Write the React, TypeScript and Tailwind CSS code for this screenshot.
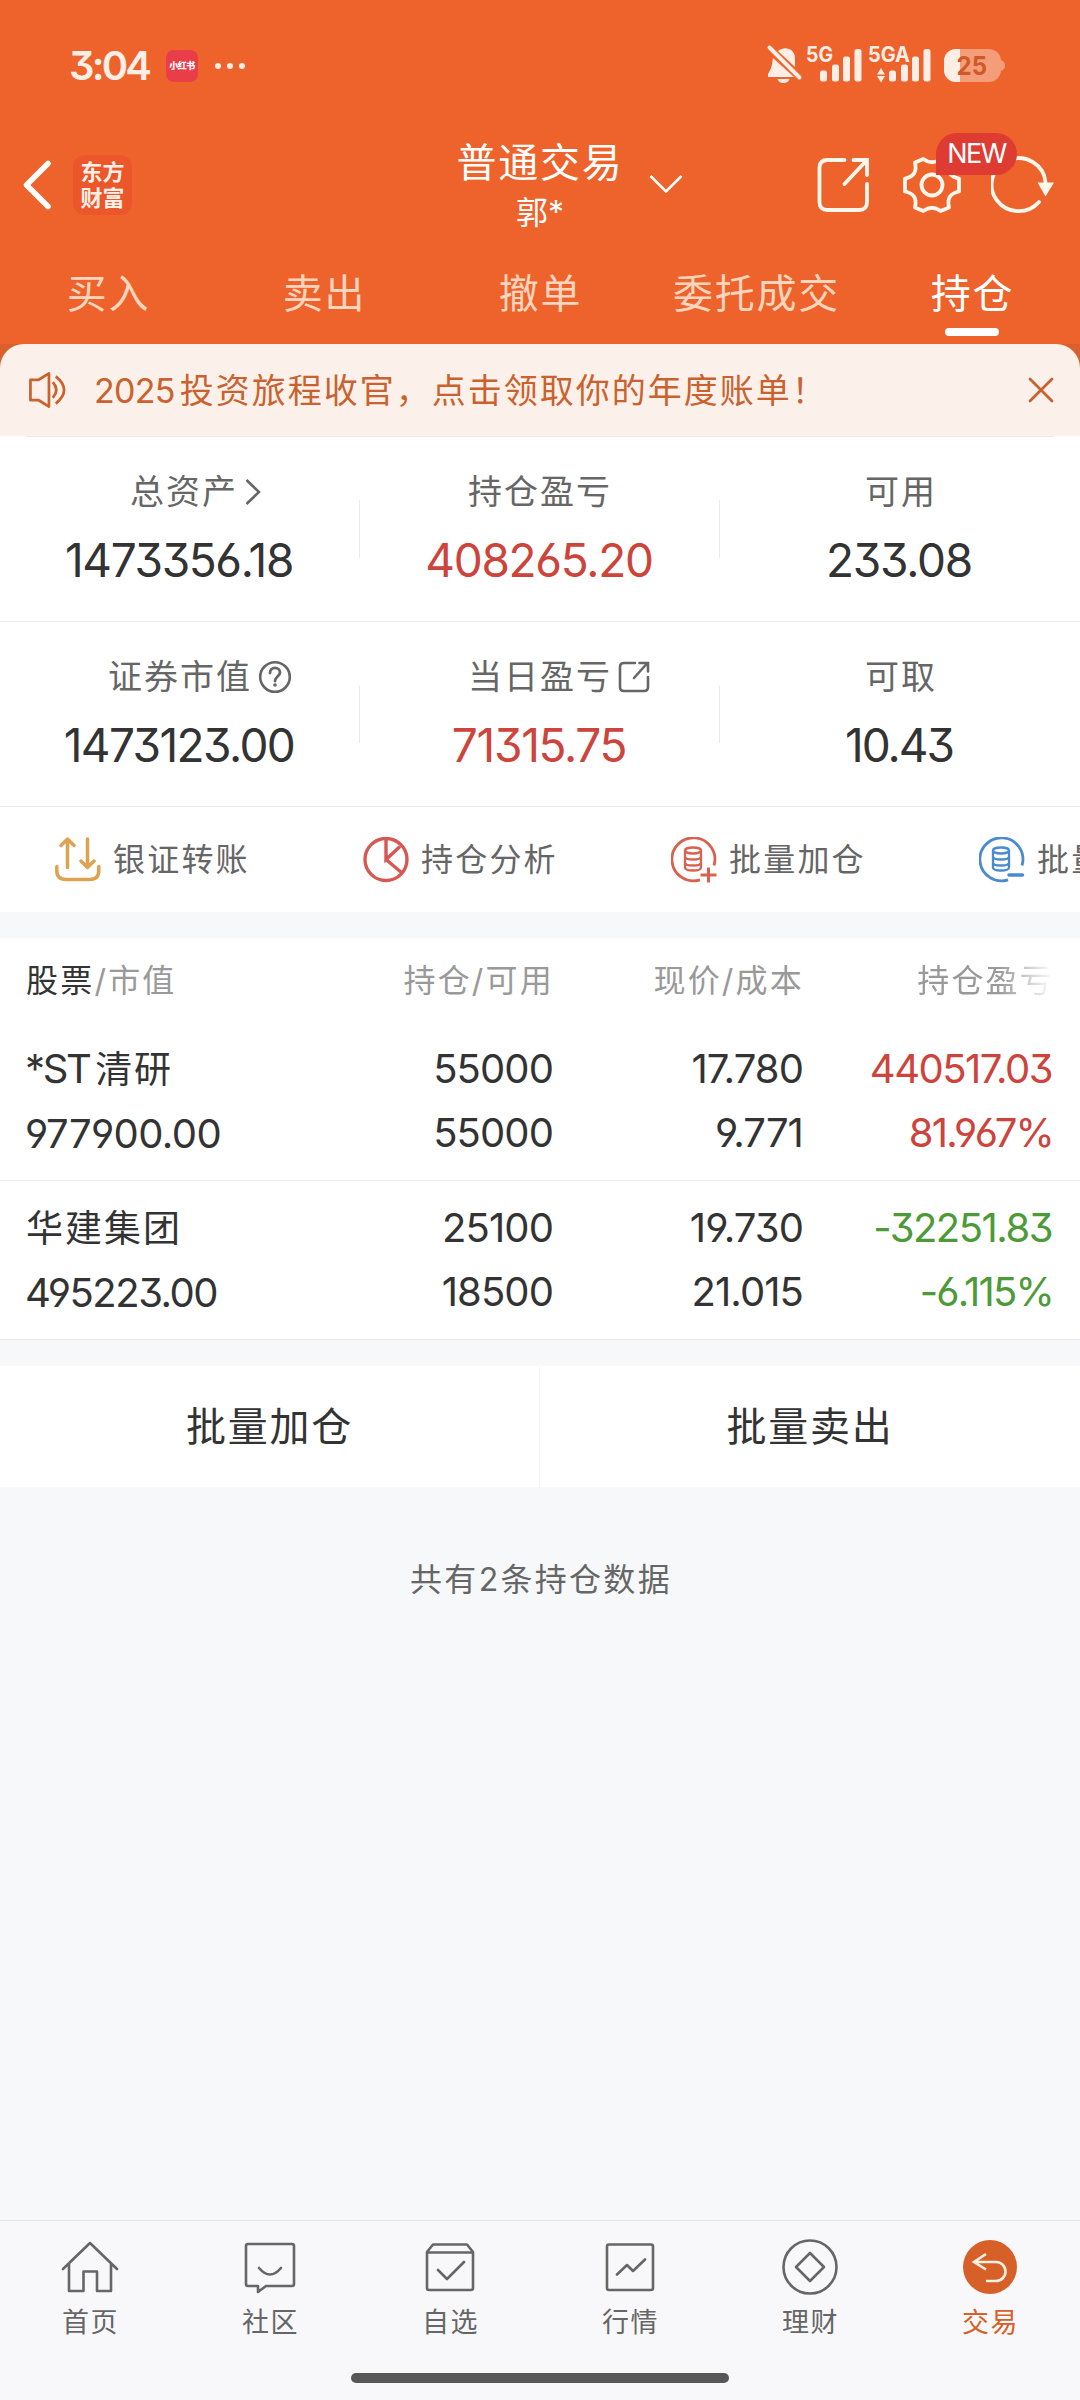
import type { ReactNode } from "react";

const NUM = "[font-feature-settings:'cv03','cv04','cv09'] font-normal";

function StatusBar() {
  return (
    <div className="flex h-[132px] items-center pr-[74px] pl-[69px] text-[#ffeee6]">
      <span className="w-[80px] text-[40px] leading-[132px] font-semibold tracking-[-2.800px] whitespace-nowrap [font-feature-settings:'cv09']">3:04</span>
      <span className="ml-[17px] flex h-8 w-8 items-center justify-center rounded-lg bg-[#e93d49] text-[9px] font-black tracking-[-0.5px] whitespace-nowrap text-white">
        小红书
      </span>
      <span className="ml-[17px] flex gap-[6px]">
        <i className="size-[6px] rounded-full bg-[#ffeee6]" />
        <i className="size-[6px] rounded-full bg-[#ffeee6]" />
        <i className="size-[6px] rounded-full bg-[#ffeee6]" />
      </span>
      <svg className="ml-auto" width="240" height="62" viewBox="766 35 240 62" fill="currentColor">
        <path d="M773 58c-1 6-1 10-5 16v3h26zM778 51c8-6 17-1 17 7v9zM777.500 79h12c-1 3-3.500 4-6 4s-5-1-6-4z" />
        <path d="M769.500 47.500l30 30" stroke="currentColor" strokeWidth="4" strokeLinecap="round" />
        <text x="806" y="61.500" fontSize="21" fontWeight="700" textLength="27" lengthAdjust="spacingAndGlyphs">5G</text>
        <rect x="820" y="70.500" width="7" height="11" rx="2.500" />
        <rect x="832" y="64.500" width="7" height="17" rx="2.500" />
        <rect x="843" y="56.500" width="7" height="25" rx="2.500" />
        <rect x="854.500" y="49" width="7" height="32.500" rx="2.500" />
        <text x="868" y="61.500" fontSize="21" fontWeight="700" textLength="42" lengthAdjust="spacingAndGlyphs">5GA</text>
        <path d="M881 68l4 6.500h-8zM881 82.500l4-6.500h-8z" />
        <rect x="889" y="70.500" width="7" height="11" rx="2.500" />
        <rect x="901" y="64.500" width="7" height="17" rx="2.500" />
        <rect x="912" y="56.500" width="7" height="25" rx="2.500" />
        <rect x="923.500" y="49" width="7" height="32.500" rx="2.500" />
        <clipPath id="charge">
          <rect x="944" y="49" width="57" height="33" rx="12" />
        </clipPath>
        <rect x="944" y="49" width="57" height="33" rx="12" fill="#f59d79" />
        <path d="M1000.500 60q4.500 1 4.500 5.500t-4.500 5.500z" fill="#f59d79" />
        <rect x="944" y="49" width="16" height="33" clipPath="url(#charge)" />
        <text x="956.500" y="75" fontSize="26" fontWeight="700" fill="#d0592a" textLength="30.500" lengthAdjust="spacingAndGlyphs">25</text>
      </svg>
    </div>
  );
}

function TitleBar() {
  return (
    <div className="relative grid h-[106px] grid-cols-[1fr_auto_1fr] items-center text-white">
      <div className="flex items-center pl-[22px]">
        <svg width="30" height="50" viewBox="0 0 30 50" fill="none" stroke="currentColor" strokeWidth="5.500" strokeLinecap="round" strokeLinejoin="round">
          <path d="M26 3.500L4.500 25 26 46.500" />
        </svg>
        <div className="ml-[21px] flex h-[60px] w-[59px] flex-col items-center justify-center rounded-xl bg-[#eb562a] text-[22px] leading-[26px] font-bold text-[#fff0e6]">
          <span>东方</span>
          <span>财富</span>
        </div>
      </div>
      <div className="flex flex-col items-center pt-[3px] pb-[1px]">
        <div className="flex h-[54px] items-center">
          <span className="text-[40px] leading-[54px] tracking-[1.700px]">普通交易</span>
          <span className="w-0 pt-[54px]">
            <svg className="ml-[26px] -mt-[12px]" width="34" height="20" viewBox="0 0 34 20" fill="none" stroke="currentColor" strokeWidth="2.500">
              <path d="M1.500 2L17 17.500 32.500 2" />
            </svg>
          </span>
        </div>
        <span className="h-[46px] text-[32px] leading-[46px]">郭*</span>
      </div>
      <div className="flex items-center justify-end pr-[25px]">
        <svg width="54" height="58" viewBox="816.5 156 54 58" fill="none" stroke="#fff7ec" strokeWidth="3.800" strokeLinecap="round">
          <path d="M845 160h-17q-8 0-8 8v34q0 8 8 8h31.500q8 0 8-8v-18M845 184l22-23.500M854 160h13.500v15" />
        </svg>
        <svg className="ml-[32px]" width="60" height="60" viewBox="0 0 60 60" fill="none" stroke="#fff7ec" strokeWidth="3.800" strokeLinejoin="round">
          <path d="M21.300 4Q30 10.500 38.700 4L47 7.500C45 16 47.500 21.500 57 23.500V36.500C47.500 38.500 45 44 47 52.500L38.700 56Q30 49.500 21.300 56L13 52.500C15 44 12.500 38.500 3 36.500V23.500C12.500 21.500 15 16 13 7.500Z" />
          <circle cx="30" cy="30" r="10.500" />
        </svg>
        <svg className="ml-[29px]" width="64" height="60" viewBox="991 155 64 60" fill="none" stroke="#fff7ec" strokeWidth="3.800" strokeLinecap="round">
          <path d="M1045.500 182A27 26.500 0 1 0 1039 202" />
          <path d="M1037.500 182.500h16.500L1045.500 196.500z" fill="#fff7ec" stroke="none" />
        </svg>
      </div>
      <span className="absolute top-[1px] left-[936px] flex h-[42px] w-[81px] items-center justify-center rounded-t-[21px] rounded-br-[21px] bg-[#de3b33] text-[27px] font-normal tracking-[-1.500px]">
        NEW
      </span>
    </div>
  );
}

const TABS = ["买入", "卖出", "撤单", "委托成交", "持仓"];

function Tabs() {
  return (
    <div className="grid h-[106px] grid-cols-5">
      {TABS.map((tab) =>
        tab === "持仓" ? (
          <div key={tab} className="flex flex-col items-center pt-[29px] text-[40px] leading-[54px] tracking-[1.700px] text-white">
            <span className="pl-px">{tab}</span>
            <span className="mt-[7px] h-2 w-[54px] rounded-full bg-white" />
          </div>
        ) : (
          <div key={tab} className="pt-[29px] pl-px text-center text-[40px] leading-[54px] tracking-[1.700px] text-[#ffd5bd]">
            {tab}
          </div>
        ),
      )}
    </div>
  );
}

function Notice() {
  return (
    <div className="bg-[linear-gradient(#d9602c_50%,white_50%)]">
      <div className="flex h-[92px] items-center rounded-t-[24px] bg-[#fcf1ea] pr-[26px] pl-[28px] text-[#c9622e]">
        <svg width="39" height="40" viewBox="0 0 40 40" fill="none" stroke="currentColor" strokeWidth="2.800" strokeLinejoin="round">
          <path d="M2.500 9.500h8.500L21.500 3v34L11 30.500H2.500z" />
          <path d="M25.500 12q7 8 0 16M28.500 6q17 14 0 28" />
        </svg>
        <span className="ml-[27px] text-[34px] tracking-[2px] whitespace-nowrap [font-feature-settings:'cv03','cv04','cv09']">
          <span className="tracking-[-0.700px]">2025</span>
          <span className="ml-[5px]">投资旅程收官，点击领取你的年度账单！</span>
        </span>
        <svg className="ml-auto" width="26" height="26" viewBox="0 0 26 26" fill="none" stroke="currentColor" strokeWidth="2.800" strokeLinecap="round">
          <path d="M2 2l22 22M24 2L2 24" />
        </svg>
      </div>
    </div>
  );
}

function ShareSmall() {
  return (
    <svg width="32" height="32" viewBox="0 0 32 32" fill="none" stroke="currentColor" strokeWidth="2.600" strokeLinecap="round">
      <path d="M17 2H6Q2 2 2 6v20q0 4 4 4h20q4 0 4-4V16M16 17L29 2.500M21.500 2H30v8.500" />
    </svg>
  );
}

type StatProps = { label: string; value: string; tone?: string; icon?: ReactNode; divider?: boolean; track?: string; inset?: string };

function Stat({ label, value, tone = "text-[#333]", icon, divider, track = "tracking-[-1.300px]", inset = "pl-0" }: StatProps) {
  return (
    <div className="relative flex h-[184px] flex-col items-center pt-[31px]">
      <div className={"flex h-12 items-center text-[34px] leading-[48px] tracking-[2px] text-[#666] " + inset}>
        <span>{label}</span>
        <span className="w-0">{icon}</span>
      </div>
      <span className={"mt-[16px] pr-[2px] text-[46px] leading-[56px] whitespace-nowrap " + NUM + " " + tone + " " + track}>{value}</span>
      {divider && <i className="absolute top-[63px] right-0 h-[58px] w-px bg-[#ebebeb]" />}
    </div>
  );
}

function Summary() {
  return (
    <section className="bg-white">
      <div className="mx-[26px] h-px bg-[#ececec]" />
      <div className="grid grid-cols-3 border-b border-[#ececec]">
        <Stat
          label="总资产"
          value="1473356.18"
          divider
          track="tracking-[-1.400px]"
          inset="pl-[8px]"
          icon={
            <svg className="ml-[7px]" width="16" height="28" viewBox="0 0 16 28" fill="none" stroke="currentColor" strokeWidth="2.600">
              <path d="M1.500 2L14 14 1.500 26" />
            </svg>
          }
        />
        <Stat label="持仓盈亏" value="408265.20" tone="text-[#cc443c]" divider />
        <Stat label="可用" value="233.08" inset="pl-[2px]" />
      </div>
      <div className="grid grid-cols-3 border-b border-[#ececec]">
        <Stat
          label="证券市值"
          value="1473123.00"
          divider
          track="tracking-[-1.600px]"
          icon={
            <svg className="ml-[6px]" width="34" height="34" viewBox="0 0 34 34" fill="none" stroke="currentColor" strokeWidth="2.600" strokeLinecap="round">
              <circle cx="17" cy="17" r="14.800" />
              <path d="M12 13c0-7 10-6.500 10-.5 0 4-5 4-5 8.500" strokeWidth="2.800" />
              <circle cx="17" cy="25" r="1.800" fill="currentColor" stroke="none" />
            </svg>
          }
        />
        <Stat label="当日盈亏" value="71315.75" tone="text-[#cc443c]" divider icon={<span className="ml-[6px] block w-8"><ShareSmall /></span>} />
        <Stat label="可取" value="10.43" inset="pl-[2px]" track="tracking-[-2px]" />
      </div>
    </section>
  );
}

function Coins() {
  return (
    <g strokeWidth="2.300">
      <ellipse cx="22.500" cy="14" rx="8" ry="3" />
      <path d="M14.500 14v17q0 3 8 3t8-3V14M14.500 20q0 3 8 3t8-3M14.500 26q0 3 8 3t8-3" />
    </g>
  );
}

function Shortcut({ label, children }: { label: string; children: ReactNode }) {
  return (
    <div className="flex w-[308px] shrink-0 items-center">
      <svg width="46" height="46" viewBox="0.5 0.5 46 46" fill="none" strokeWidth="2.800">
        {children}
      </svg>
      <span className="ml-[12px] text-[32px] tracking-[2.200px] whitespace-nowrap text-[#666]">{label}</span>
    </div>
  );
}

function Shortcuts() {
  return (
    <div className="flex h-[105px] overflow-hidden bg-white pl-[55px]">
      <Shortcut label="银证转账">
        <g stroke="#dda352" strokeWidth="3.500" strokeLinecap="round" strokeLinejoin="round">
          <path d="M13 31V3M6.500 9L13 2.500L19.500 9M33 2.500V31M26.500 24.500L33 31l6.500-6.500M2.300 30v4q0 9 9 9h24q9 0 9-9v-4" />
        </g>
      </Shortcut>
      <Shortcut label="持仓分析">
        <g stroke="#d65853" strokeWidth="3.400">
          <circle cx="23.500" cy="23" r="21" />
          <path d="M23.500 2v21l14-13M23.500 23L39 36" />
        </g>
      </Shortcut>
      <Shortcut label="批量加仓">
        <g stroke="#d8624f">
          <path d="M43.500 29A21.500 21.500 0 1 0 29.500 43.300" />
          <Coins />
          <path d="M38 31v15M30 38.500h16" strokeWidth="3" />
        </g>
      </Shortcut>
      <Shortcut label="批量卖出">
        <g stroke="#4a8ad0">
          <path d="M43.500 29A21.500 21.500 0 1 0 29.500 43.300" />
          <Coins />
          <path d="M30.500 38.500H44" strokeWidth="3.500" strokeLinecap="round" />
        </g>
      </Shortcut>
    </div>
  );
}

const HOLDINGS = [
  {
    name: (
      <>
        <span className="tracking-[-2.400px]">*ST</span>
        <span className="ml-[6px] text-[37px] tracking-[1.600px]">清研</span>
      </>
    ),
    value: "977900.00",
    valueTrack: "tracking-[-0.600px]",
    amount: "55000",
    usable: "55000",
    price: "17.780",
    cost: "9.771",
    profit: "440517.03",
    rate: "81.967%",
    tone: "text-[#cc443c]",
  },
  {
    name: <span className="ml-px text-[37px] tracking-[2px]">华建集团</span>,
    value: "495223.00",
    valueTrack: "tracking-[-1.500px]",
    amount: "25100",
    usable: "18500",
    price: "19.730",
    cost: "21.015",
    profit: "-32251.83",
    rate: "-6.115%",
    tone: "text-[#4d9a38]",
  },
];

function Holdings() {
  return (
    <section className="mt-[26px] bg-white">
      <div className="grid h-[84px] grid-cols-[304px_250px_250px_250px] text-right text-[32px] leading-[86px] tracking-[2.200px] text-[#999]">
        <span className="pl-[26px] text-left">
          <span className="text-[#333]">股票</span>/市值
        </span>
        <span>持仓/可用</span>
        <span>现价/成本</span>
        <span className="[mask-image:linear-gradient(to_right,black_78%,transparent)]">持仓盈亏</span>
      </div>
      {HOLDINGS.map((h) => (
        <div
          key={h.value}
          className={"grid h-[159px] grid-cols-[303px_250px_250px_249px] border-b border-[#ebebeb] pt-[15px] text-right text-[40px] leading-[64px] tracking-[-0.900px] whitespace-nowrap text-[#333] " + NUM}
        >
          <div className="flex flex-col pl-[25px] text-left">
            <span>{h.name}</span>
            <span className={h.valueTrack}>{h.value}</span>
          </div>
          <div className="flex flex-col">
            <span>{h.amount}</span>
            <span>{h.usable}</span>
          </div>
          <div className="flex flex-col">
            <span>{h.price}</span>
            <span>{h.cost}</span>
          </div>
          <div className={"flex flex-col tracking-[-1.500px] " + h.tone}>
            <span>{h.profit}</span>
            <span className="-mr-px tracking-[-1.800px]">{h.rate}</span>
          </div>
        </div>
      ))}
    </section>
  );
}

function NavItem({ label, active, children }: { label: string; active?: boolean; children: ReactNode }) {
  return (
    <div className={active ? "flex flex-col items-center pt-[16px] text-[#d66027]" : "flex flex-col items-center pt-[16px] text-[#666]"}>
      <svg width="60" height="60" viewBox="0 0 60 60" fill="none" stroke="currentColor" strokeWidth="2.600" strokeLinejoin="round" strokeLinecap="round">
        {children}
      </svg>
      <span className="mt-[8px] pl-px text-[27px] leading-[36px] tracking-[1.400px]">{label}</span>
    </div>
  );
}

function BottomNav() {
  return (
    <nav className="mt-auto h-[180px] border-t border-[#e3e5e8] bg-[#f8f8fa]">
      <div className="grid h-[152px] grid-cols-6">
        <NavItem label="首页">
          <path d="M3 32L30 6l27 26M9 27v27h14.500V34.500h13.500V54H51V27" />
        </NavItem>
        <NavItem label="社区">
          <path d="M8 7h44q2 0 2 2v38q0 2-2 2H26l-8 6v-6H8q-2 0-2-2V9q0-2 2-2zM19 31q11 13 22 0" />
        </NavItem>
        <NavItem label="自选">
          <path d="M7 15v36q0 2 2 2h42q2 0 2-2V15l-6-7.500H13zM7 15.500h46M18 33l9 9 17-17" />
        </NavItem>
        <NavItem label="行情">
          <path d="M9 7.500h42q2 0 2 2V51q0 2-2 2H9q-2 0-2-2V9.500q0-2 2-2zM17 37.500L27 28l6 6 12-11.500" />
        </NavItem>
        <NavItem label="理财">
          <circle cx="30" cy="30" r="26.500" />
          <path d="M30 16l14 14-14 14-14-14z" />
        </NavItem>
        <NavItem label="交易" active>
          <circle cx="30" cy="30" r="27" fill="currentColor" stroke="none" />
          <path d="M26 17L14 25l12 7.500M14 25h22a9.500 9.500 0 0 1 0 19H26" stroke="#fff0e4" strokeWidth="2.600" strokeLinejoin="miter" strokeLinecap="butt" />
        </NavItem>
      </div>
      <div className="mx-auto h-[10px] w-[378px] rounded-full bg-[#575757]" />
    </nav>
  );
}

export default function App() {
  return (
    <div className="flex h-[2400px] w-[1080px] flex-col overflow-hidden bg-[#f7f8fa] font-['Inter','Noto_Sans_CJK_SC',sans-serif]">
      <header className="bg-[#ed632b]">
        <StatusBar />
        <TitleBar />
        <Tabs />
      </header>
      <Notice />
      <Summary />
      <Shortcuts />
      <Holdings />
      <div className="mt-[26px] grid h-[121px] grid-cols-2 bg-white text-center text-[40px] leading-[121px] tracking-[1.800px] text-[#333]">
        <span className="border-r border-[#f3f4f5]">批量加仓</span>
        <span>批量卖出</span>
      </div>
      <p className="mt-[69px] pl-[2px] text-center text-[32px] leading-[48px] tracking-[2.300px] text-[#666]">共有2条持仓数据</p>
      <BottomNav />
    </div>
  );
}
